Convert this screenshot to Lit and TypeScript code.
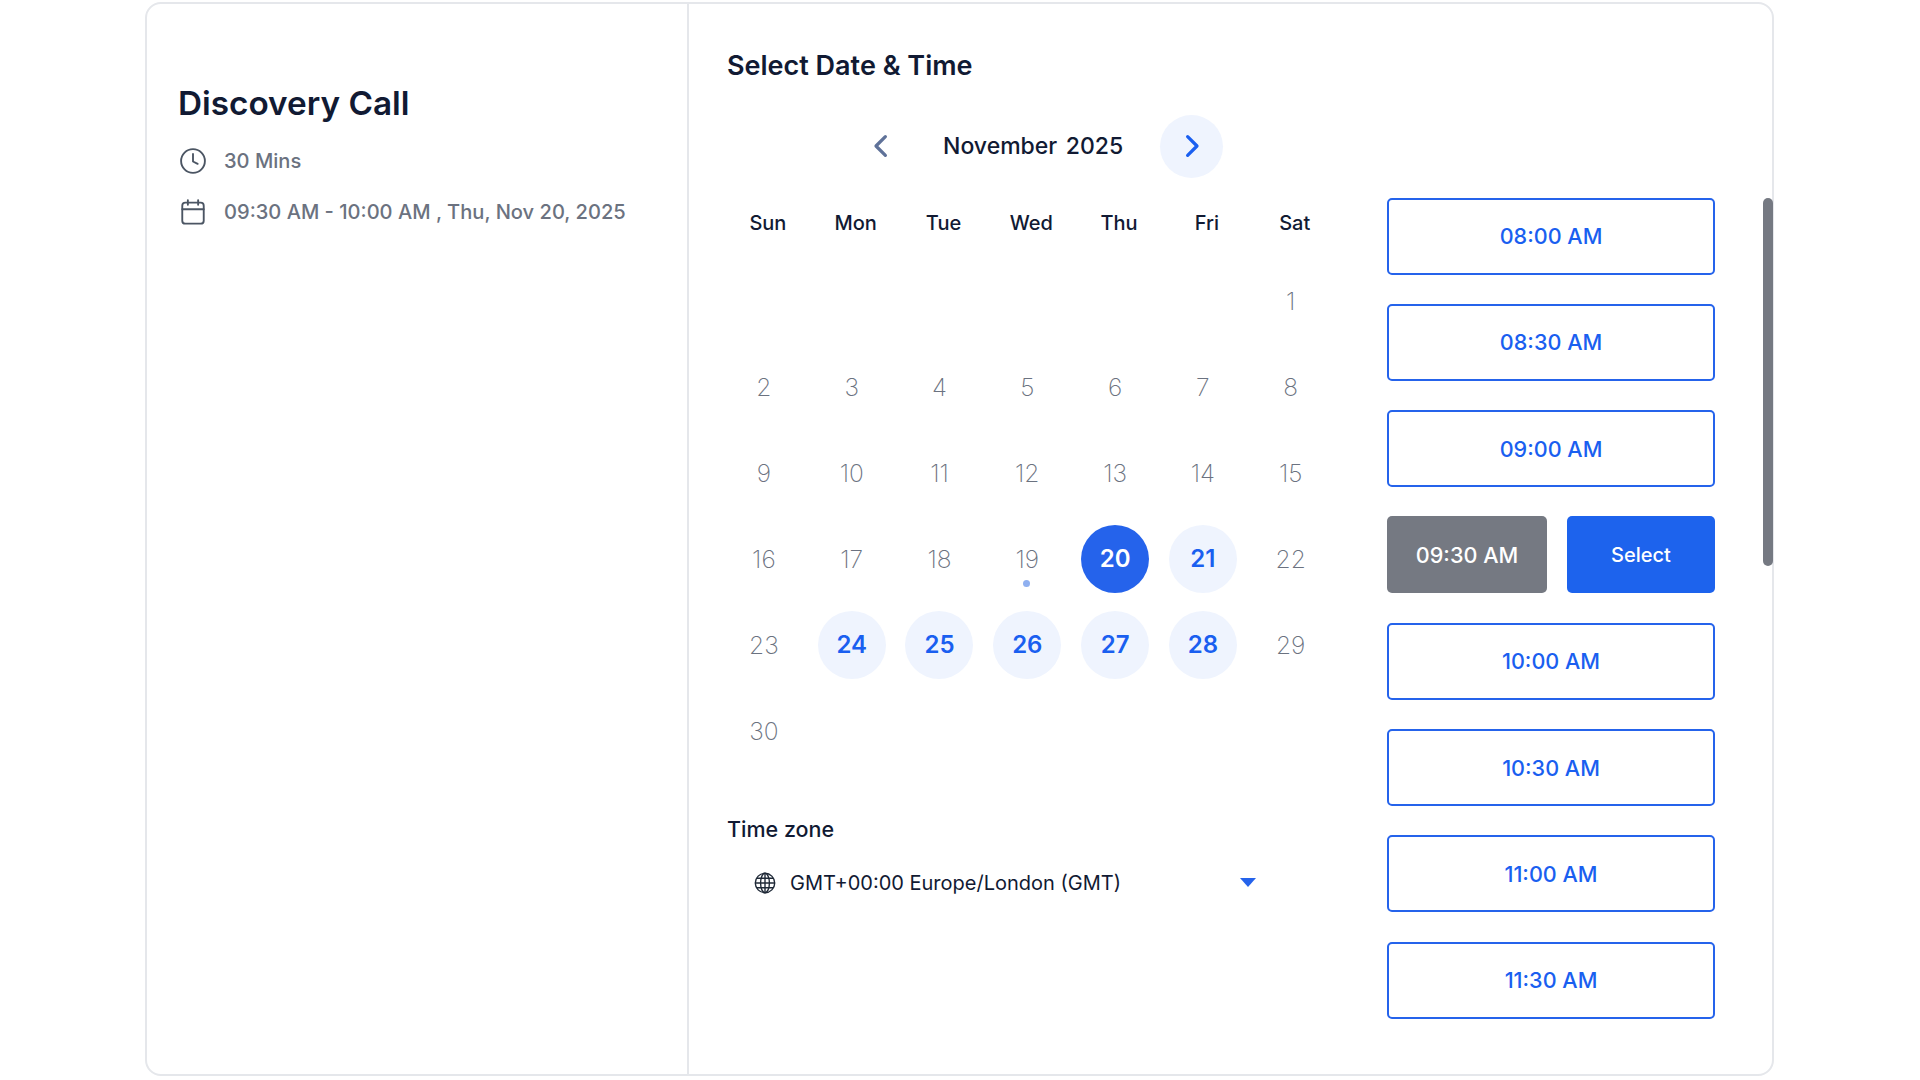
import { LitElement, html, css } from 'lit';
import { customElement } from 'lit/decorators.js';
import { classMap } from 'lit/directives/class-map.js';

const WEEKDAYS = ['Sun', 'Mon', 'Tue', 'Wed', 'Thu', 'Fri', 'Sat'];
const SLOTS = ['08:00 AM', '08:30 AM', '09:00 AM', '09:30 AM', '10:00 AM', '10:30 AM', '11:00 AM', '11:30 AM'];
// november 2025 starts on a saturday
const LEAD = 6;
const DAYS = 30;
const AVAILABLE = [21, 24, 25, 26, 27, 28];
const SELECTED_DAY = 20;
const TODAY = 19;
const SELECTED_SLOT = '09:30 AM';

@customElement('app-root')
export class AppRoot extends LitElement {
  static styles = css`
    :host {
      display: block;
      height: 1080px;
      box-sizing: border-box;
      padding: 2px 0 0 145px;
      font-family: Inter, 'Liberation Sans', sans-serif;
      background: #ffffff;
      overflow: hidden;
    }
    .card {
      box-sizing: border-box;
      width: 1629px;
      height: 1074px;
      display: flex;
      border: 2px solid #e5e7eb;
      border-radius: 16px;
    }
    .side {
      box-sizing: border-box;
      width: 542px;
      flex: none;
      border-right: 2px solid #e5e7eb;
      padding: 80px 0 0 31px;
    }
    .side h1 {
      margin: 0 0 24px;
      font-size: 33.3px;
      line-height: 38px;
      font-weight: 600;
      color: #111a33;
    }
    .meta {
      display: flex;
      align-items: center;
      gap: 17px;
      height: 30px;
      margin-bottom: 21px;
      font-size: 20.1px;
      font-weight: 500;
      color: #6b7280;
    }
    .meta svg {
      width: 28px;
      height: 28px;
      margin-left: 1px;
      flex: none;
      color: #4b5563;
    }
    .main {
      flex: 1;
      padding: 45px 0 0 38px;
    }
    .main h2 {
      margin: 0 0 31.6px;
      font-size: 27px;
      line-height: 34px;
      font-weight: 600;
      color: #111a33;
    }
    .body {
      display: flex;
    }
    .calendar {
      width: 660px;
      flex: none;
    }
    .nav {
      display: flex;
      align-items: center;
      height: 63px;
      padding-left: 122px;
    }
    .nav-btn {
      width: 63px;
      height: 63px;
      border-radius: 50%;
      display: flex;
      align-items: center;
      justify-content: center;
      color: #5f7299;
    }
    .nav-btn svg {
      width: 30px;
      height: 30px;
    }
    .nav-btn.next {
      background: #eff4fe;
      color: #1a5ff0;
    }
    .month {
      width: 178px;
      margin: 0 39px 0 31px;
      font-size: 23px;
      font-weight: 500;
      white-space: nowrap;
      word-spacing: 2.5px;
      color: #111a33;
    }
    .weekdays,
    .days {
      display: grid;
      grid-template-columns: repeat(7, 87.8px);
    }
    .weekdays {
      margin: 33px 0 23px -3px;
      font-size: 20px;
      line-height: 24px;
      font-weight: 500;
      text-align: center;
      color: #111a33;
    }
    .days {
      grid-auto-rows: 86px;
      margin-left: -7px;
    }
    .day {
      position: relative;
      display: flex;
      align-items: center;
      justify-content: center;
      font-size: 24.5px;
      font-weight: 200;
      color: #6b7280;
    }
    .day span {
      width: 68px;
      height: 68px;
      border-radius: 50%;
      display: flex;
      align-items: center;
      justify-content: center;
    }
    .day.available span {
      background: #eff4fe;
      color: #1a5ff0;
      font-size: 24px;
      font-weight: 600;
    }
    .day.selected span {
      background: #2563eb;
      color: #ffffff;
      font-size: 24px;
      font-weight: 600;
    }
    .day .dot {
      position: absolute;
      left: 50%;
      top: 64px;
      width: 7px;
      height: 7px;
      margin-left: -4px;
      border-radius: 50%;
      background: #8fb0f0;
    }
    .tz-label {
      margin-top: 43px;
      font-size: 21.5px;
      line-height: 24px;
      font-weight: 500;
      color: #111a33;
    }
    .tz {
      box-sizing: border-box;
      width: 529px;
      display: flex;
      align-items: center;
      gap: 14px;
      height: 24px;
      margin-top: 30px;
      padding-left: 27px;
      font-size: 20px;
      color: #111a33;
    }
    .tz svg.globe {
      width: 22px;
      height: 22px;
      flex: none;
    }
    .tz svg.caret {
      width: 16px;
      height: 9px;
      margin-left: auto;
    }
    .times {
      display: flex;
      margin-top: 83px;
    }
    .slots {
      width: 328px;
      display: flex;
      flex-direction: column;
      gap: 29.3px;
    }
    .slot {
      box-sizing: border-box;
      height: 77px;
      display: flex;
      align-items: center;
      justify-content: center;
      border: 2px solid #2563eb;
      border-radius: 5px;
      font-size: 21.6px;
      font-weight: 500;
      color: #1a5ff0;
    }
    .split {
      display: flex;
      gap: 20px;
    }
    .split .slot {
      border: none;
      color: #ffffff;
    }
    .slot.picked {
      width: 160px;
      background: #757982;
    }
    .slot.confirm {
      flex: 1;
      background: #1d63ed;
      font-size: 20px;
      font-weight: 500;
    }
    .thumb {
      width: 10px;
      height: 368px;
      margin-left: 48px;
      border-radius: 5px;
      background: #757982;
    }
  `;

  renderDays() {
    const cells = [];
    for (let i = 0; i < LEAD; i++) cells.push(html`<div></div>`);
    for (let d = 1; d <= DAYS; d++) {
      const classes = {
        day: true,
        available: AVAILABLE.includes(d),
        selected: d === SELECTED_DAY,
      };
      cells.push(html`<div class=${classMap(classes)}>
        <span>${d}</span>
        ${d === TODAY ? html`<i class="dot"></i>` : ''}
      </div>`);
    }
    return cells;
  }

  renderSlot(time: string) {
    if (time === SELECTED_SLOT) {
      return html`<div class="split">
        <div class="slot picked">${time}</div>
        <div class="slot confirm">Select</div>
      </div>`;
    }
    return html`<div class="slot">${time}</div>`;
  }

  render() {
    return html`
      <div class="card">
        <aside class="side">
          <h1>Discovery Call</h1>
          <div class="meta">
            <svg viewBox="0 0 24 24" fill="none" stroke="currentColor" stroke-width="1.6" stroke-linecap="round" stroke-linejoin="round">
              <circle cx="12" cy="12" r="10.2"></circle>
              <path d="M12 6v6.4l4 2"></path>
            </svg>
            30 Mins
          </div>
          <div class="meta">
            <svg viewBox="0 0 24 24" fill="none" stroke="currentColor" stroke-width="1.6" stroke-linecap="round" stroke-linejoin="round">
              <rect x="2.8" y="4" width="18.4" height="18" rx="2.6"></rect>
              <path d="M2.8 9.6h18.4M7.6 1.8v4M16.4 1.8v4"></path>
            </svg>
            09:30 AM - 10:00 AM , Thu, Nov 20, 2025
          </div>
        </aside>
        <main class="main">
          <h2>Select Date &amp; Time</h2>
          <div class="body">
            <section class="calendar">
              <div class="nav">
                <div class="nav-btn">
                  <svg viewBox="0 0 24 24" fill="none" stroke="currentColor" stroke-width="2.6" stroke-linecap="round" stroke-linejoin="round">
                    <path d="M15.5 4.5L8 12l7.5 7.5"></path>
                  </svg>
                </div>
                <div class="month">November 2025</div>
                <div class="nav-btn next">
                  <svg viewBox="0 0 24 24" fill="none" stroke="currentColor" stroke-width="2.6" stroke-linecap="round" stroke-linejoin="round">
                    <path d="M8.5 4.5L16 12l-7.5 7.5"></path>
                  </svg>
                </div>
              </div>
              <div class="weekdays">
                ${WEEKDAYS.map((w) => html`<div>${w}</div>`)}
              </div>
              <div class="days">${this.renderDays()}</div>
              <div class="tz-label">Time zone</div>
              <div class="tz">
                <svg class="globe" viewBox="0 0 24 24" fill="none" stroke="#1f2937" stroke-width="1.5">
                  <circle cx="12" cy="12" r="10.6"></circle>
                  <ellipse cx="12" cy="12" rx="4.8" ry="10.6"></ellipse>
                  <path d="M12 1.4v21.2M1.4 12h21.2M3 6.8h18M3 17.2h18"></path>
                </svg>
                GMT+00:00 Europe/London (GMT)
                <svg class="caret" viewBox="0 0 16 9"><path d="M0 0h16L8 9z" fill="#2563eb"></path></svg>
              </div>
            </section>
            <section class="times">
              <div class="slots">${SLOTS.map((s) => this.renderSlot(s))}</div>
              <div class="thumb"></div>
            </section>
          </div>
        </main>
      </div>
    `;
  }
}
